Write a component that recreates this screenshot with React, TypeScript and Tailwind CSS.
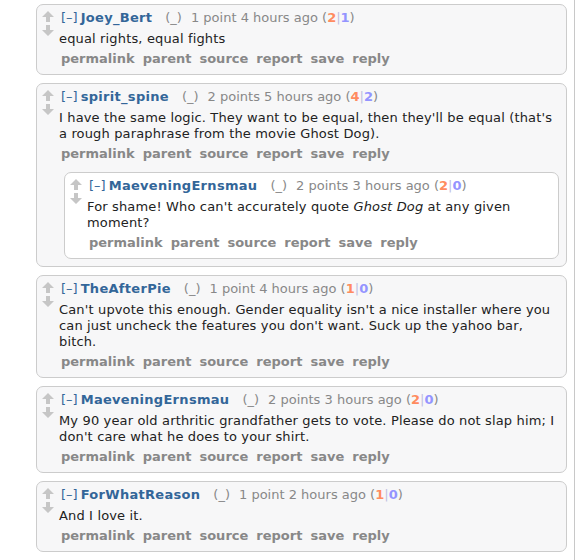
import React from 'react';

type Comment = {
  author: string;
  points: string;
  age: string;
  up: number;
  down: number;
  body: React.ReactNode;
  children?: Comment[];
};

const comments: Comment[] = [
  { author: 'Joey_Bert', points: '1 point', age: '4 hours ago', up: 2, down: 1, body: 'equal rights, equal fights' },
  {
    author: 'spirit_spine',
    points: '2 points',
    age: '5 hours ago',
    up: 4,
    down: 2,
    body: "I have the same logic. They want to be equal, then they'll be equal (that's a rough paraphrase from the movie Ghost Dog).",
    children: [
      {
        author: 'MaeveningErnsmau',
        points: '2 points',
        age: '3 hours ago',
        up: 2,
        down: 0,
        body: (
          <>
            For shame! Who can't accurately quote <em>Ghost Dog</em> at any given moment?
          </>
        ),
      },
    ],
  },
  {
    author: 'TheAfterPie',
    points: '1 point',
    age: '4 hours ago',
    up: 1,
    down: 0,
    body: "Can't upvote this enough. Gender equality isn't a nice installer where you can just uncheck the features you don't want. Suck up the yahoo bar, bitch.",
  },
  {
    author: 'MaeveningErnsmau',
    points: '2 points',
    age: '3 hours ago',
    up: 2,
    down: 0,
    body: "My 90 year old arthritic grandfather gets to vote. Please do not slap him; I don't care what he does to your shirt.",
  },
  { author: 'ForWhatReason', points: '1 point', age: '2 hours ago', up: 1, down: 0, body: 'And I love it.' },
];

function Arrow({ down }: { down?: boolean }) {
  return (
    <svg width="12" height="12" viewBox="0 0 12 12" className="block">
      {down ? (
        <polygon points="4,0 8,0 8,5 12,5 6,11 0,5 4,5" fill="#c6c6c6" />
      ) : (
        <polygon points="6,0 12,6 8,6 8,11 4,11 4,6 0,6" fill="#c6c6c6" />
      )}
    </svg>
  );
}

function CommentBox({ c, nested }: { c: Comment; nested?: boolean }) {
  return (
    <div
      className={`flex rounded-[7px] border border-[#cccccc] pt-[5px] pb-[7px] pr-[7px] ${
        nested ? 'bg-white ml-[5px] mt-[10px]' : 'bg-[#f7f7f8]'
      }`}
    >
      <div className="w-[22px] shrink-0 flex flex-col gap-[2px] pl-[5px] pt-[1px]">
        <Arrow />
        <Arrow down />
      </div>
      <div className="flex-1 min-w-0">
        <div className="ml-[2px] leading-[16px] text-[13px] whitespace-nowrap">
          <span className="text-[#336699] mr-[3px]">[–]</span>
          <span className="text-[#336699] font-bold tracking-[0.3px] mr-[13px]">{c.author}</span>
          <span className="text-[#888888] mr-[9px]">(_)</span>
          <span className="text-[#888888]">
            {c.points} {c.age} (
            <span className="text-[#ff8b60] font-bold">{c.up}</span>
            <span className="text-[#c0c0e0]">|</span>
            <span className="text-[#9494ff] font-bold">{c.down}</span>)
          </span>
        </div>
        <div className="mt-[5px] text-[13px] leading-[16px] tracking-[0.15px] text-[#222222]">{c.body}</div>
        <div className="ml-[2px] mt-[4px] flex gap-[8px] text-[13px] leading-[16px] font-bold text-[#888888]">
          <span>permalink</span>
          <span>parent</span>
          <span>source</span>
          <span>report</span>
          <span>save</span>
          <span>reply</span>
        </div>
        {c.children?.map((child, i) => (
          <CommentBox key={i} c={child} nested />
        ))}
      </div>
    </div>
  );
}

export default function App() {
  return (
    <div
      className="w-[575px] h-[560px] border-r border-[#c8c8c8] bg-white pt-[4px] pl-[36px] pr-[7px] overflow-hidden"
      style={{ fontFamily: '"DejaVu Sans", Verdana, sans-serif' }}
    >
      <div className="flex flex-col gap-[8px]">
        {comments.map((c, i) => (
          <CommentBox key={i} c={c} />
        ))}
      </div>
    </div>
  );
}
